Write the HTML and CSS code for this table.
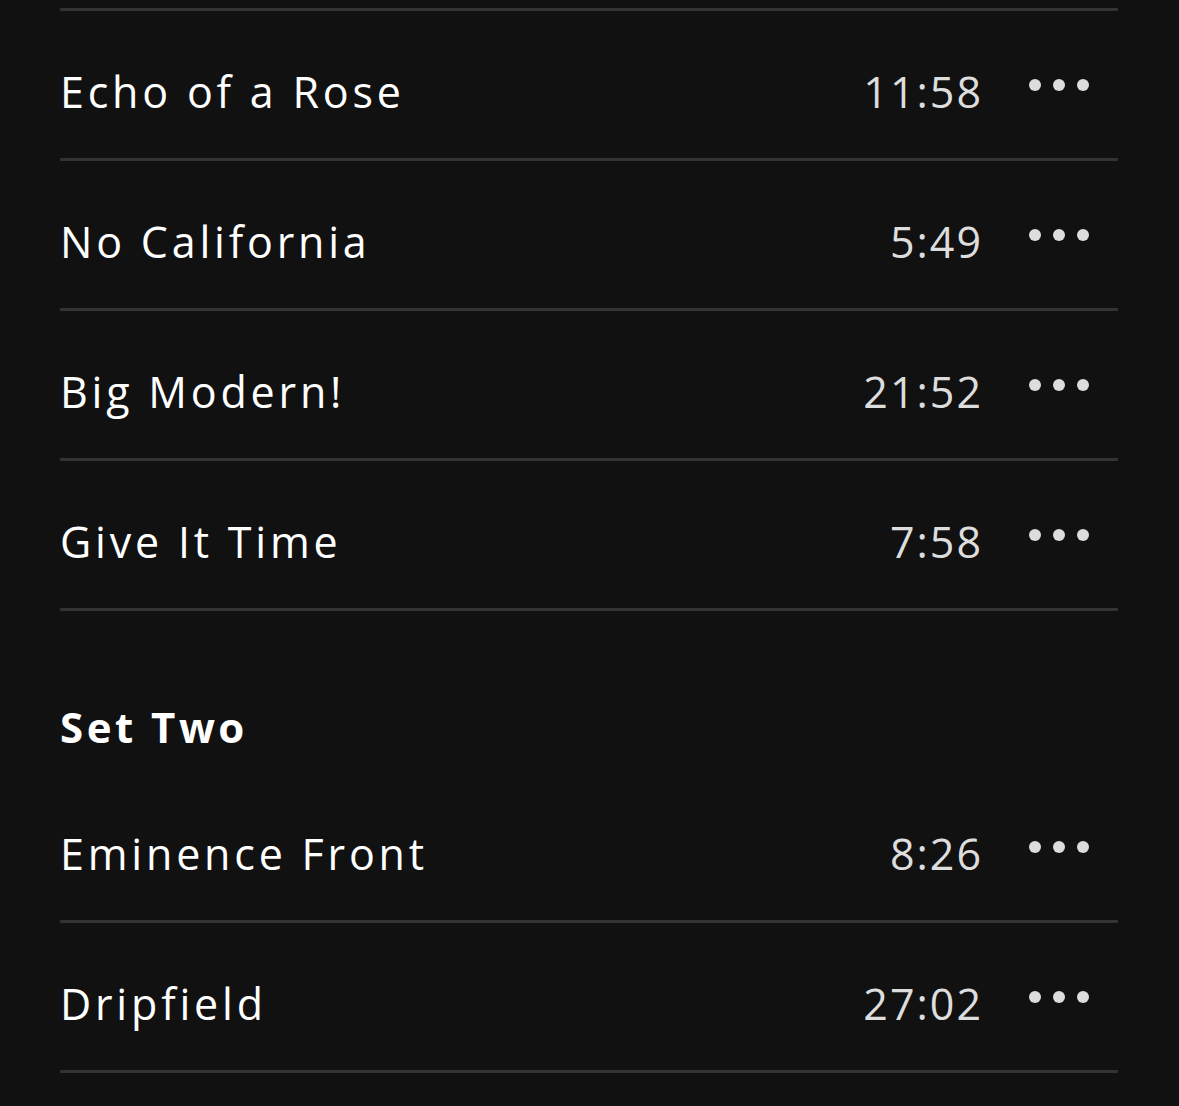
FILE: index.html
```html
<!DOCTYPE html>
<html lang="en">

<head>
    <meta charset="UTF-8">
    <meta name="viewport" content="width=device-width, initial-scale=1.0">
    <title>Setlist</title>
    <link rel="stylesheet" href="styles.css">
</head>

<body>
    <div class="setlist">
        <div class="track first">
            <span class="title">Echo of a Rose</span>
            <span class="length">11:58</span>
            <span class="more"><i></i><i></i><i></i></span>
        </div>
        <div class="track">
            <span class="title">No California</span>
            <span class="length">5:49</span>
            <span class="more"><i></i><i></i><i></i></span>
        </div>
        <div class="track">
            <span class="title">Big Modern!</span>
            <span class="length">21:52</span>
            <span class="more"><i></i><i></i><i></i></span>
        </div>
        <div class="track">
            <span class="title">Give It Time</span>
            <span class="length">7:58</span>
            <span class="more"><i></i><i></i><i></i></span>
        </div>

        <h2 class="set-name">Set Two</h2>

        <div class="track">
            <span class="title">Eminence Front</span>
            <span class="length">8:26</span>
            <span class="more"><i></i><i></i><i></i></span>
        </div>
        <div class="track">
            <span class="title">Dripfield</span>
            <span class="length">27:02</span>
            <span class="more"><i></i><i></i><i></i></span>
        </div>
    </div>
</body>

</html>
```

FILE: styles.css
```css
body {
    font-family: "Open Sans", "Liberation Sans", sans-serif;
    background-color: #111;
    color: #fff;
    margin: 0;
    padding: 0;
}

.setlist {
    padding: 8px 61px 0 60px;
}

.track {
    display: flex;
    align-items: center;
    height: 147px;
    border-bottom: 3px solid #333;
    font-size: 43px;
}

.track.first {
    border-top: 3px solid #333;
}

.title {
    flex: 1;
    padding-top: 14px;
    letter-spacing: 3.8px;
}

.length {
    color: #ddd;
    padding-top: 14px;
    letter-spacing: 2px;
}

.more {
    display: flex;
    gap: 12px;
    margin: 0 29px 0 46px;
}

.more i {
    display: block;
    width: 12px;
    height: 12px;
    border-radius: 50%;
    background-color: #ddd;
}

.set-name {
    margin: 0;
    padding: 82px 0 0;
    height: 80px;
    font-size: 42px;
    font-weight: 700;
    letter-spacing: 3.5px;
    line-height: 68px;
}
```
